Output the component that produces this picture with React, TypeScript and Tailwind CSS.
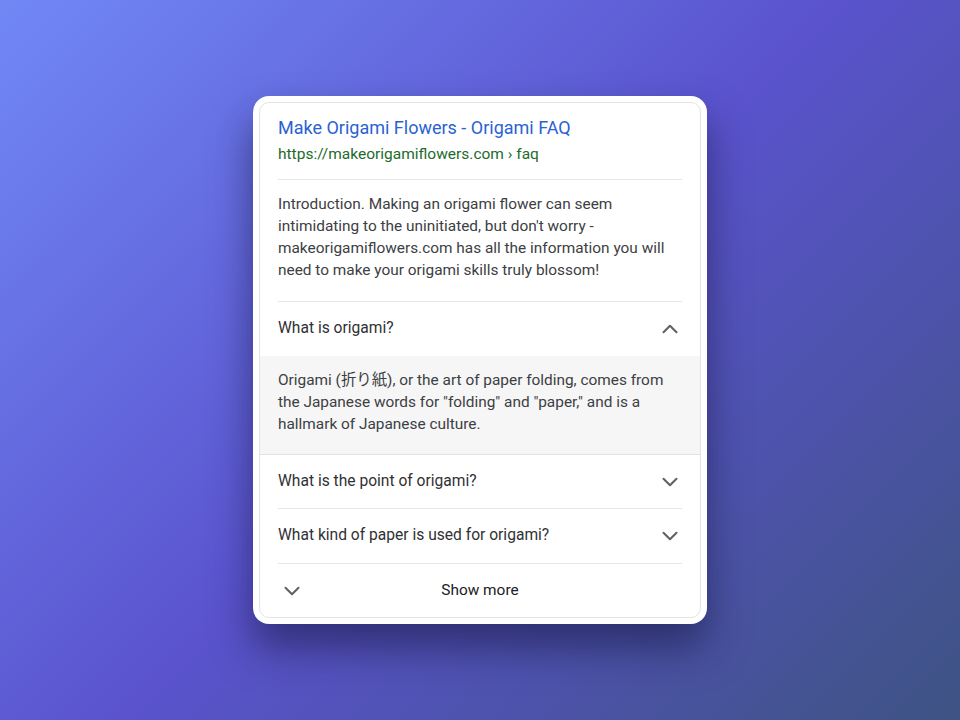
import React from "react";

function Chevron({ up = false }: { up?: boolean }) {
  return (
    <svg width="26" height="26" viewBox="0 0 24 24" fill="none" stroke="#5f6368" strokeWidth="1.9" strokeLinecap="round" strokeLinejoin="round">
      {up ? <path d="M6 15l6-6 6 6" /> : <path d="M6 9l6 6 6-6" />}
    </svg>
  );
}

export default function App() {
  return (
    <div
      className="w-full h-[720px] flex items-center justify-center bg-[linear-gradient(135deg,#7188f5_0%,#5a53cd_50%,#3e5383_100%)]"
      style={{ fontFamily: "Roboto, 'Noto Sans CJK JP', sans-serif" }}
    >
      <div className="w-[454px] rounded-[16px] bg-white p-[6px] shadow-[0_24px_40px_rgba(25,25,70,0.6)]">
        <div className="rounded-[10px] border border-[#e4e4e4] overflow-hidden bg-white">
          <div className="mx-[18px] pt-[13px] pb-[15px] border-b border-[#e6e6e6]">
            <div className="text-[18px] leading-[24px] text-[#2a62d3]">Make Origami Flowers - Origami FAQ</div>
            <div className="mt-[4px] text-[15.5px] leading-[20px] text-[#1e6a2c]">https://makeorigamiflowers.com › faq</div>
          </div>
          <div className="mx-[18px] pt-[13px] pb-[20px] border-b border-[#e6e6e6] text-[15.4px] leading-[22px] text-[#3c4043]">
            Introduction. Making an origami flower can seem intimidating to the uninitiated, but don't worry - makeorigamiflowers.com has all the information you will need to make your origami skills truly blossom!
          </div>
          <div className="mx-[18px] h-[54px] flex items-center justify-between text-[15.6px] text-[#303134]">
            <span>What is origami?</span>
            <span className="mr-[-1px]"><Chevron up /></span>
          </div>
          <div className="bg-[#f6f6f6] px-[18px] pt-[13px] pb-[19px] border-b border-[#e2e2e2] text-[15.4px] leading-[22px] text-[#3c4043]">
            Origami (折り紙), or the art of paper folding, comes from the Japanese words for "folding" and "paper," and is a hallmark of Japanese culture.
          </div>
          <div className="mx-[18px] h-[54px] flex items-center justify-between border-b border-[#e6e6e6] text-[15.6px] text-[#303134]">
            <span>What is the point of origami?</span>
            <span className="mr-[-1px]"><Chevron /></span>
          </div>
          <div className="mx-[18px] h-[55px] flex items-center justify-between border-b border-[#e6e6e6] text-[15.6px] text-[#303134]">
            <span>What kind of paper is used for origami?</span>
            <span className="mr-[-1px]"><Chevron /></span>
          </div>
          <div className="mx-[18px] h-[53px] flex items-center text-[15.4px] text-[#202124]">
            <span className="ml-[1px]"><Chevron /></span>
            <span className="flex-1 text-center pr-[27px]">Show more</span>
          </div>
        </div>
      </div>
    </div>
  );
}
